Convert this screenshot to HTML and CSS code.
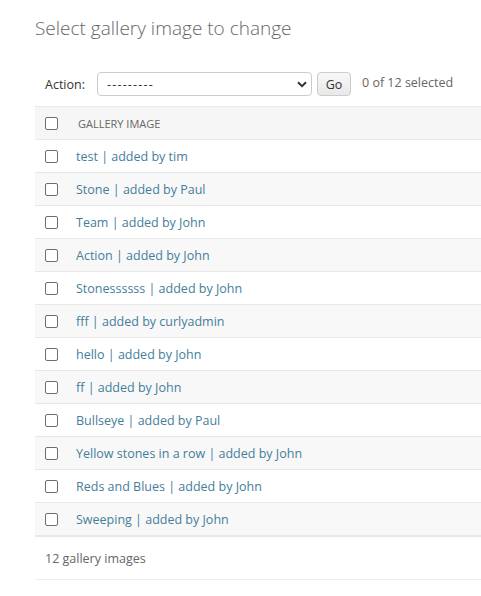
FILE: index.html
```html
<!DOCTYPE html>
<html lang="en">
<head>
<meta charset="utf-8">
<title>Select gallery image to change</title>
<link rel="stylesheet" href="styles.css">
</head>
<body>
<div class="content">
  <h1 class="title">Select gallery image to change</h1>
  <div class="changelist">
    <div class="actions">
      <label class="action-label">Action:</label>
      <div class="select-wrap">
        <select class="action-select">
          <option>---------</option>
        </select>
        <svg class="chevron" width="10" height="7" viewBox="0 0 10 7"><path d="M1 1.2 L5 5.2 L9 1.2" fill="none" stroke="#333" stroke-width="2"/></svg>
      </div>
      <button class="go-btn" type="button">Go</button>
      <span class="counter">0 of 12 selected</span>
    </div>
    <table class="results">
      <thead>
        <tr>
          <th class="cb-col"><input type="checkbox" class="cb"></th>
          <th class="name-col">Gallery image</th>
        </tr>
      </thead>
      <tbody>
        <tr><td class="cb-col"><input type="checkbox" class="cb"></td><td><a href="#">test | added by tim</a></td></tr>
        <tr class="alt"><td class="cb-col"><input type="checkbox" class="cb"></td><td><a href="#">Stone | added by Paul</a></td></tr>
        <tr><td class="cb-col"><input type="checkbox" class="cb"></td><td><a href="#">Team | added by John</a></td></tr>
        <tr class="alt"><td class="cb-col"><input type="checkbox" class="cb"></td><td><a href="#">Action | added by John</a></td></tr>
        <tr><td class="cb-col"><input type="checkbox" class="cb"></td><td><a href="#">Stonessssss | added by John</a></td></tr>
        <tr class="alt"><td class="cb-col"><input type="checkbox" class="cb"></td><td><a href="#">fff | added by curlyadmin</a></td></tr>
        <tr><td class="cb-col"><input type="checkbox" class="cb"></td><td><a href="#">hello | added by John</a></td></tr>
        <tr class="alt"><td class="cb-col"><input type="checkbox" class="cb"></td><td><a href="#">ff | added by John</a></td></tr>
        <tr><td class="cb-col"><input type="checkbox" class="cb"></td><td><a href="#">Bullseye | added by Paul</a></td></tr>
        <tr class="alt"><td class="cb-col"><input type="checkbox" class="cb"></td><td><a href="#">Yellow stones in a row | added by John</a></td></tr>
        <tr><td class="cb-col"><input type="checkbox" class="cb"></td><td><a href="#">Reds and Blues | added by John</a></td></tr>
        <tr class="alt"><td class="cb-col"><input type="checkbox" class="cb"></td><td><a href="#">Sweeping | added by John</a></td></tr>
      </tbody>
    </table>
    <p class="paginator">12 gallery images</p>
  </div>
</div>
</body>
</html>
```
FILE: styles.css
```css
html, body {
  margin: 0;
  padding: 0;
  background: #fff;
}
body {
  font-family: "Open Sans", "Liberation Sans", sans-serif;
  color: #333;
  font-size: 12.5px;
}
.content {
  padding: 14px 0 0 35px;
}
.title {
  margin: 0;
  font-size: 19px;
  line-height: 28px;
  font-weight: 300;
  color: #666;
}
.changelist {
  margin-top: 20px;
}
.actions {
  display: flex;
  align-items: center;
  padding: 10px;
  height: 24px;
}
.action-label {
  color: #333;
  font-size: 12.5px;
  margin-right: 12px;
}
.select-wrap {
  position: relative;
  width: 215px;
  height: 24px;
}
.action-select {
  appearance: none;
  -webkit-appearance: none;
  width: 215px;
  height: 24px;
  box-sizing: border-box;
  border: 1px solid #ccc;
  border-radius: 4px;
  background: #fff;
  font-family: inherit;
  font-size: 12.5px;
  letter-spacing: 1.2px;
  color: #333;
  padding: 0 0 0 9px;
  margin: 0;
}
.chevron {
  position: absolute;
  right: 5px;
  top: 9px;
}
.go-btn {
  margin-left: 5px;
  width: 34px;
  height: 24px;
  box-sizing: border-box;
  border: 1px solid #ccc;
  border-radius: 4px;
  background: linear-gradient(#f8f8f8, #e8e8e8);
  font-family: inherit;
  font-size: 12.5px;
  color: #333;
  padding: 0;
}
.counter {
  margin-left: 11px;
  color: #666;
  font-size: 12.5px;
  position: relative;
  top: -2px;
}
.results {
  width: 100%;
  border-collapse: collapse;
}
.results th, .results td {
  padding: 9px 10px 7px;
  line-height: 16px;
  text-align: left;
  vertical-align: middle;
}
.results thead th {
  background: #f6f6f6;
  border-top: 1px solid #e8e8e8;
  border-bottom: 1px solid #e8e8e8;
  color: #666;
  font-size: 11px;
  font-weight: 500;
  text-transform: uppercase;
}
.results th.name-col {
  padding-left: 12px;
}
.results td {
  border-bottom: 1px solid #e8e8e8;
  font-size: 12.5px;
}
.results tbody tr:last-child td {
  border-bottom: none;
}
.results tr.alt td {
  background: #f8f8f8;
}
.cb-col {
  width: 13px;
}
.results .cb-col {
  padding: 8px 8px 8px 10px;
}
.cb {
  appearance: none;
  -webkit-appearance: none;
  display: block;
  width: 13px;
  height: 13px;
  margin: 0;
  box-sizing: border-box;
  border: 1px solid #6e6e6e;
  border-radius: 2px;
  background: #fff;
}
.results a {
  color: #447e9b;
  text-decoration: none;
}
.paginator {
  margin: 0;
  padding: 11px 10px 9px;
  line-height: 22px;
  font-size: 12.5px;
  color: #666;
  border-top: 2px solid #e8e8e8;
  border-bottom: 1px solid #eee;
}
```
